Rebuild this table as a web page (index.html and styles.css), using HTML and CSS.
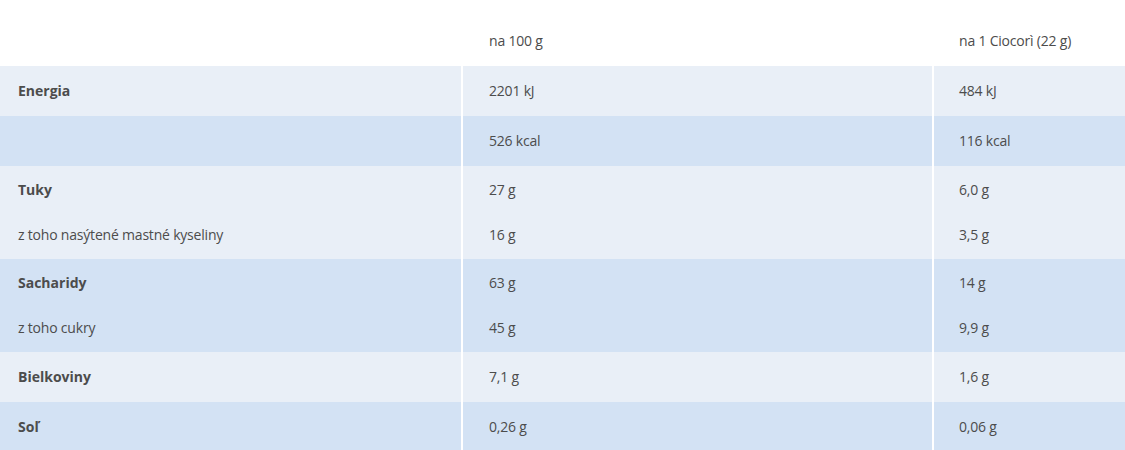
FILE: index.html
```html
<!DOCTYPE html>
<html lang="sk">
<head>
<meta charset="utf-8">
<title>Výživové hodnoty</title>
<link rel="stylesheet" href="styles.css">
</head>
<body>
<table class="nutri">
  <colgroup>
    <col class="c1">
    <col class="c2">
    <col class="c3">
  </colgroup>
  <thead>
    <tr class="head">
      <th></th>
      <th>na 100 g</th>
      <th>na 1 Ciocorì (22 g)</th>
    </tr>
  </thead>
  <tbody>
    <tr class="light single"><td class="lbl">Energia</td><td>2201 kJ</td><td>484 kJ</td></tr>
    <tr class="dark single"><td class="lbl"></td><td>526 kcal</td><td>116 kcal</td></tr>
    <tr class="light top"><td class="lbl">Tuky</td><td>27 g</td><td>6,0 g</td></tr>
    <tr class="light bottom"><td>z toho nasýtené mastné kyseliny</td><td>16 g</td><td>3,5 g</td></tr>
    <tr class="dark top"><td class="lbl">Sacharidy</td><td>63 g</td><td>14 g</td></tr>
    <tr class="dark bottom"><td>z toho cukry</td><td>45 g</td><td>9,9 g</td></tr>
    <tr class="light single"><td class="lbl">Bielkoviny</td><td>7,1 g</td><td>1,6 g</td></tr>
    <tr class="dark single"><td class="lbl">Soľ</td><td>0,26 g</td><td>0,06 g</td></tr>
  </tbody>
</table>
</body>
</html>
```
FILE: styles.css
```css
html, body {
  margin: 0;
  padding: 0;
  background: #ffffff;
}
.nutri {
  width: 1125px;
  border-collapse: separate;
  border-spacing: 0;
  table-layout: fixed;
  font-family: "Open Sans", "Noto Sans", sans-serif;
  font-size: 14px;
  letter-spacing: -0.2px;
  color: #4c4c4c;
}
.c1 { width: 461px; }
.c2 { width: 471px; }
.c3 { width: 193px; }
.nutri th,
.nutri td {
  padding: 0;
  text-align: left;
  line-height: 24px;
  font-weight: 400;
  box-sizing: border-box;
}
.nutri th:first-child,
.nutri td:first-child {
  padding-left: 18px;
}
.nutri th + th,
.nutri td + td {
  border-left: 2px solid #ffffff;
  padding-left: 26px;
}
.nutri th:last-child,
.nutri td:last-child {
  padding-left: 25px;
}
.head th {
  height: 66px;
  vertical-align: bottom;
  padding-bottom: 13px;
}
.light { background: #e9eff7; }
.dark { background: #d3e2f4; }
.single td { height: 50px; }
.top td { height: 46px; padding-top: 2px; vertical-align: middle; }
.bottom td { height: 47px; padding-bottom: 2px; vertical-align: middle; }
.lbl { font-weight: 700 !important; letter-spacing: 0; }
```
